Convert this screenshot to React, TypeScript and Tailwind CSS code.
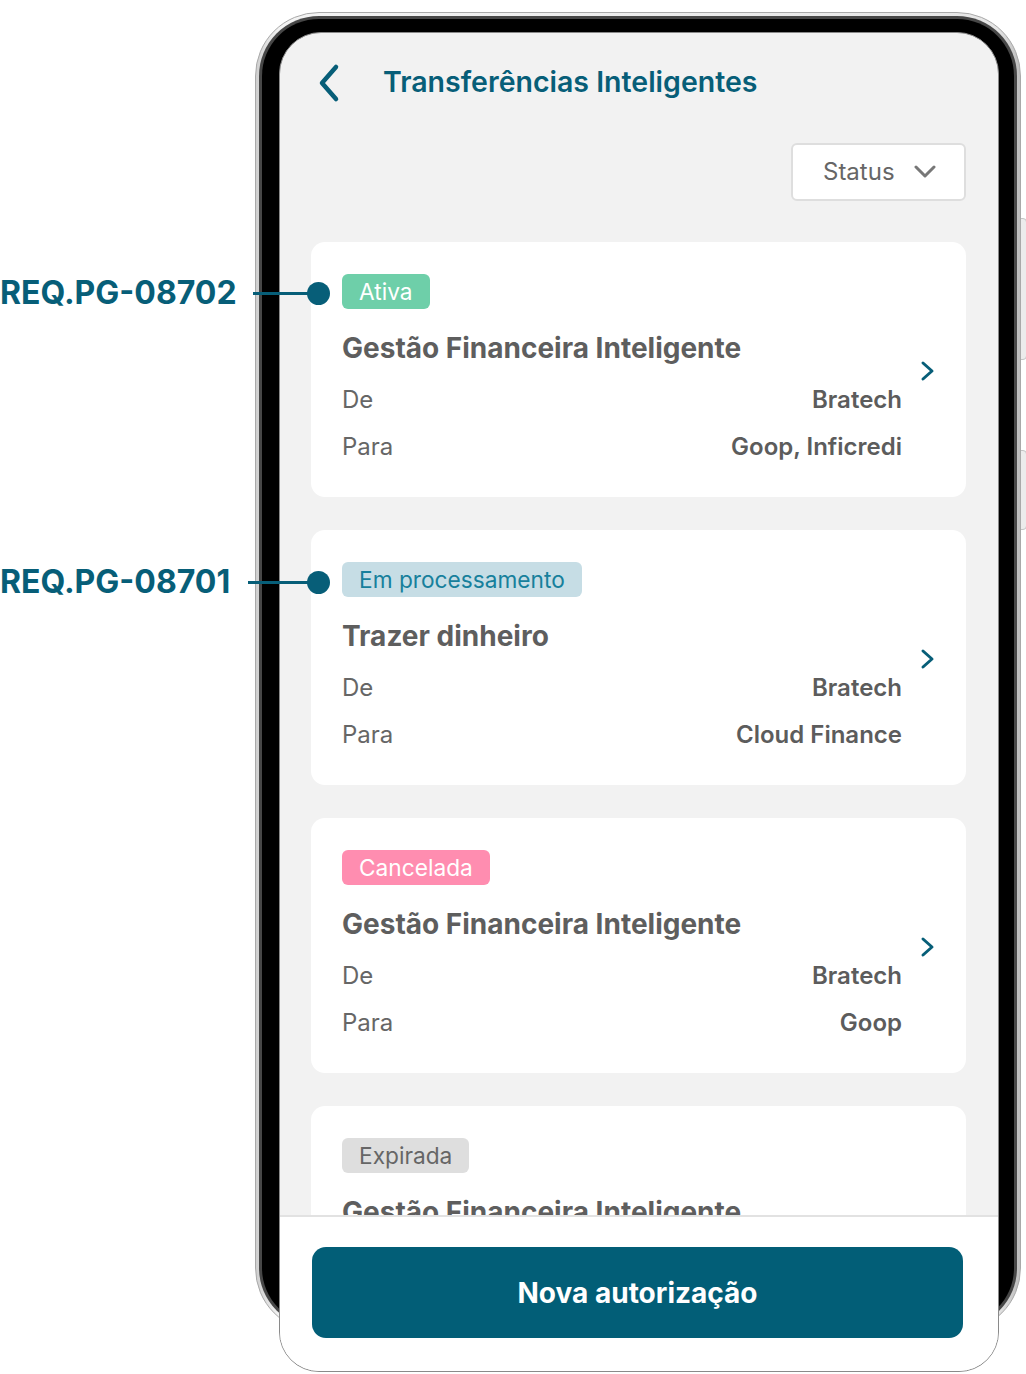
import { ReactNode } from "react";

const teal = "text-[#075e78]";

type Card = {
  status: string;
  badge: string;
  title: string;
  from: string;
  to: string;
};

const cards: Card[] = [
  {
    status: "Ativa",
    badge: "bg-[#6ecfa9] text-white",
    title: "Gestão Financeira Inteligente",
    from: "Bratech",
    to: "Goop, Inficredi",
  },
  {
    status: "Em processamento",
    badge: "bg-[#c6dde5] text-[#17809c]",
    title: "Trazer dinheiro",
    from: "Bratech",
    to: "Cloud Finance",
  },
  {
    status: "Cancelada",
    badge: "bg-[#ff8db0] text-white",
    title: "Gestão Financeira Inteligente",
    from: "Bratech",
    to: "Goop",
  },
  {
    status: "Expirada",
    badge: "bg-[#dedede] text-[#666666]",
    title: "Gestão Financeira Inteligente",
    from: "Bratech",
    to: "Goop",
  },
];

function ChevronRight() {
  return (
    <svg width="16" height="22" viewBox="0 0 16 22" fill="none">
      <path d="M3 3l9 8-9 8" stroke="#075e78" strokeWidth="3" strokeLinecap="round" strokeLinejoin="round" />
    </svg>
  );
}

function Row({ label, value }: { label: string; value: string }) {
  return (
    <div className="flex items-center justify-between text-[24px] leading-[30px]">
      <span className="text-[#666666]">{label}</span>
      <span className="font-semibold text-[#5c5c5c]">{value}</span>
    </div>
  );
}

function TransferCard({ card }: { card: Card }) {
  return (
    <div className="flex h-[255px] shrink-0 items-center rounded-[14px] bg-white pl-[31px] pr-[30px]">
      <div className="flex h-full flex-1 flex-col pt-[32px]">
        <div className="flex">
          <span className={`rounded-[6px] px-[17px] text-[22.7px] leading-[35px] ${card.badge}`}>{card.status}</span>
        </div>
        <h3 className="mt-[21px] text-[28px] font-bold leading-[36px] text-[#5e5e5e]">{card.title}</h3>
        <div className="mt-[19px]">
          <Row label="De" value={card.from} />
        </div>
        <div className="mt-[17px]">
          <Row label="Para" value={card.to} />
        </div>
      </div>
      <div className="ml-[18px] mt-[2px]">
        <ChevronRight />
      </div>
    </div>
  );
}

function Callout({ id, top, lineLeft }: { id: string; top: string; lineLeft: string }) {
  return (
    <div className={`absolute left-0 flex h-[40px] w-[330px] items-center ${top}`}>
      <span className={`text-[32px] font-bold leading-none ${teal}`}>{id}</span>
      <div className={`absolute right-[12px] h-[3px] bg-[#075e78] ${lineLeft}`} />
      <div className="absolute right-0 h-[23px] w-[23px] rounded-full bg-[#075e78]" />
    </div>
  );
}

function Frame({ children }: { children: ReactNode }) {
  return (
    <div className="relative ml-[255px] mt-[12px] h-[1320px] w-[766px]">
      <div className="absolute right-[-6px] top-[206px] h-[142px] w-[8px] rounded-r-[4px] border border-[#c4c4c4] bg-[#ececec]" />
      <div className="absolute right-[-6px] top-[438px] h-[80px] w-[8px] rounded-r-[4px] border border-[#c4c4c4] bg-[#ececec]" />
      <div className="relative h-full rounded-[64px] border border-[#a9a9a9] bg-[linear-gradient(90deg,#cfcfcf,#f3f3f3_3%,#e6e6e6_97%,#bdbdbd)] p-[3px]">
        <div className="h-full rounded-[60px] bg-[#474747] p-[3px]">
          <div className="h-full rounded-[57px] bg-black pl-[17px] pr-[15px] pt-[13px]">{children}</div>
        </div>
      </div>
    </div>
  );
}

export default function App() {
  return (
    <div className="relative h-[1374px] w-[1026px] overflow-hidden bg-white font-['Inter','Liberation_Sans',sans-serif]">
      <Frame>
        <div className="flex h-[1340px] flex-col overflow-hidden rounded-t-[42px] rounded-b-[40px] border border-[#8a8a8a] bg-[#f2f2f2]">
          <div className="flex h-[1182px] flex-col overflow-hidden pl-[31px] pr-[32px]">
            <div className="flex h-[99px] shrink-0 items-center">
              <svg width="30" height="40" viewBox="0 0 30 40" fill="none" className="ml-[5px]">
                <path d="M20 4L6 20l14 16" stroke="#075e78" strokeWidth="4.5" strokeLinecap="round" strokeLinejoin="round" />
              </svg>
              <h1 className={`ml-[37px] text-[28.5px] font-semibold ${teal}`}>Transferências Inteligentes</h1>
            </div>
            <div className="mt-[11px] flex shrink-0 justify-end">
              <button className="flex h-[58px] w-[175px] items-center justify-between rounded-[6px] border-2 border-[#dedede] bg-white pl-[30px] pr-[28px] text-[24px] text-[#666666]">
                Status
                <svg width="22" height="14" viewBox="0 0 22 14" fill="none">
                  <path d="M2 2l9 9 9-9" stroke="#777777" strokeWidth="3" strokeLinecap="round" strokeLinejoin="round" />
                </svg>
              </button>
            </div>
            <div className="mt-[41px] flex flex-col gap-[33px]">
              {cards.map((card, i) => (
                <TransferCard key={i} card={card} />
              ))}
            </div>
          </div>
          <div className="flex-1 border-t-2 border-[#e2e2e2] bg-white pl-[32px] pr-[35px] pt-[30px]">
            <button className="flex h-[91px] w-full items-center justify-center rounded-[14px] bg-[#025e77] text-[28px] font-bold text-white">
              Nova autorização
            </button>
          </div>
        </div>
      </Frame>
      <Callout id="REQ.PG-08702" top="top-[273px]" lineLeft="left-[253px]" />
      <Callout id="REQ.PG-08701" top="top-[562px]" lineLeft="left-[248px]" />
    </div>
  );
}
